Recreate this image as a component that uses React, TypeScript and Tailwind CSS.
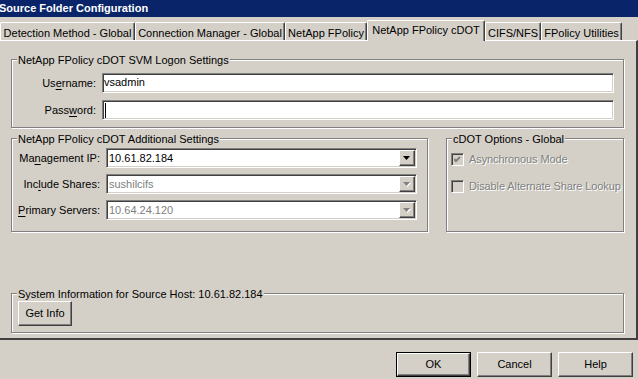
import type { ReactNode } from 'react';

const tabs = [
  { label: 'Detection Method - Global', w: 'w-[135px]' },
  { label: 'Connection Manager - Global', w: 'w-[150px]' },
  { label: 'NetApp FPolicy', w: 'w-[82px]' },
  { label: 'NetApp FPolicy cDOT', w: 'w-[118px]', active: true },
  { label: 'CIFS/NFS', w: 'w-[56px]' },
  { label: 'FPolicy Utilities', w: 'w-[81px]' },
];

const sunken =
  'border border-t-[#808080] border-l-[#808080] border-b-white border-r-white shadow-[inset_1px_1px_0_#404040,inset_-1px_-1px_0_#d4d0c8]';
const raised =
  'border border-t-white border-l-white border-b-[#404040] border-r-[#404040] shadow-[inset_-1px_-1px_0_#808080]';

// underlined mnemonic letter
const U = ({ children }: { children: ReactNode }) => <span className="underline underline-offset-[2px]">{children}</span>;

function Group({ title, className, children }: { title: string; className: string; children?: ReactNode }) {
  return (
    <div className={`relative border border-[#808080] shadow-[1px_1px_0_white,inset_1px_1px_0_white] ${className}`}>
      <span className="absolute left-[5px] top-[-6px] px-[1px] bg-[#d4d0c8] leading-[13px] whitespace-nowrap">{title}</span>
      {children}
    </div>
  );
}

function Arrow({ disabled }: { disabled?: boolean }) {
  return (
    <svg width="8" height="5" viewBox="0 0 8 5">
      {disabled && <polygon points="1,1 8,1 4.5,5" fill="#ffffff" />}
      <polygon points="0,0 7,0 3.5,4" fill={disabled ? '#808080' : '#000000'} />
    </svg>
  );
}

function Combo({ value, disabled }: { value: string; disabled?: boolean }) {
  return (
    <div className={`w-[311px] h-[20px] bg-white flex items-stretch ${sunken} p-[1px]`}>
      <span className={`flex-1 pl-[1px] leading-[16px] ${disabled ? 'text-[#808080]' : 'text-black'}`}>{value}</span>
      <div className={`w-[16px] bg-[#d4d0c8] flex items-center justify-center ${raised}`}>
        <Arrow disabled={disabled} />
      </div>
    </div>
  );
}

function Check({ checked, label }: { checked?: boolean; label: string }) {
  return (
    <div className="flex items-center gap-[5px] h-[13px] whitespace-nowrap">
      <div className={`w-[13px] h-[13px] shrink-0 bg-[#d4d0c8] flex items-center justify-center ${sunken}`}>
        {checked && (
          <svg width="7" height="7" viewBox="0 0 7 7">
            <path d="M0 3 L2 5 L6 1" stroke="#808080" strokeWidth="2" fill="none" />
          </svg>
        )}
      </div>
      <span className="text-[#808080] [text-shadow:1px_1px_0_#ffffff] leading-[13px] tracking-[-0.1px]">{label}</span>
    </div>
  );
}

function Btn({ children, primary, className = '' }: { children: ReactNode; primary?: boolean; className?: string }) {
  return (
    <div className={`h-[25px] bg-[#d4d0c8] ${primary ? 'border border-black' : ''} ${className}`}>
      <div className={`h-full w-full flex items-center justify-center ${raised}`}>{children}</div>
    </div>
  );
}

export default function App() {
  return (
    <div className="w-[638px] h-[379px] overflow-hidden bg-[#d4d0c8] font-['Liberation_Sans',Arial,sans-serif] text-[11px] text-black flex flex-col select-none">
      {/* title bar */}
      <div className="h-[17px] shrink-0 bg-[#0a246a] flex items-center text-white font-bold leading-none">
        <span className="-ml-[1px]">Source Folder Configuration</span>
      </div>

      {/* tabs */}
      <div className="h-[23px] shrink-0 flex items-end">
        {tabs.map(t => (
          <div
            key={t.label}
            className={`${t.w} flex justify-center whitespace-nowrap border-l border-t border-white border-r border-r-[#404040] shadow-[inset_-1px_0_0_#808080] rounded-t-[2px] leading-[13px]
              ${t.active ? 'relative z-10 h-[21px] -mb-[1px] pt-[3px] bg-[#d4d0c8]' : 'h-[18px] pt-[4px]'}`}
          >
            {t.label}
          </div>
        ))}
      </div>

      {/* tab page */}
      <div className="h-[300px] shrink-0 border-t border-white border-r-2 border-r-[#404040] border-b-2 border-b-[#404040] pl-[11px] pt-[18px] flex flex-col">
        <Group title="NetApp FPolicy cDOT SVM Logon Settings" className="w-[613px] h-[69px] pt-[13px] flex flex-col gap-[7px]">
          <div className="flex items-center">
            <span className="w-[84px] text-right">Us<U>e</U>rname:</span>
            <div className={`ml-[6px] w-[512px] h-[20px] bg-white ${sunken} pl-[1px] leading-[17px]`}>vsadmin</div>
          </div>
          <div className="flex items-center">
            <span className="w-[84px] text-right">Pass<U>w</U>ord:</span>
            <div className={`ml-[6px] w-[512px] h-[20px] bg-white ${sunken} pl-[2px] flex items-center`}>
              <div className="w-[1px] h-[15px] bg-black" />
            </div>
          </div>
        </Group>

        <div className="flex mt-[10px]">
          <Group title="NetApp FPolicy cDOT Additional Settings" className="w-[417px] h-[94px] pt-[9px] flex flex-col gap-[6px]">
            <div className="flex items-center">
              <span className="w-[88px] text-right">Ma<U>n</U>agement IP:</span>
              <div className="ml-[6px]"><Combo value="10.61.82.184" /></div>
            </div>
            <div className="flex items-center">
              <span className="w-[88px] text-right">Inc<U>l</U>ude Shares:</span>
              <div className="ml-[6px]"><Combo value="sushilcifs" disabled /></div>
            </div>
            <div className="flex items-center">
              <span className="w-[88px] text-right"><U>P</U>rimary Servers:</span>
              <div className="ml-[6px]"><Combo value="10.64.24.120" disabled /></div>
            </div>
          </Group>
          <Group title="cDOT Options - Global" className="ml-[18px] w-[178px] h-[94px] pt-[14px] pl-[4px] flex flex-col gap-[14px]">
            <Check checked label="Asynchronous Mode" />
            <Check label="Disable Alternate Share Lookup" />
          </Group>
        </div>

        <Group title="System Information for Source Host: 10.61.82.184" className="mt-[61px] w-[613px] h-[40px] pt-[7px] pl-[6px]">
          <Btn className="w-[54px]">Get Info</Btn>
        </Group>
      </div>

      {/* dialog buttons */}
      <div className="flex justify-end gap-[6px] pt-[12px] pr-[5px]">
        <Btn primary className="w-[75px]">OK</Btn>
        <Btn className="w-[75px]">Cancel</Btn>
        <Btn className="w-[75px]">Help</Btn>
      </div>
    </div>
  );
}
